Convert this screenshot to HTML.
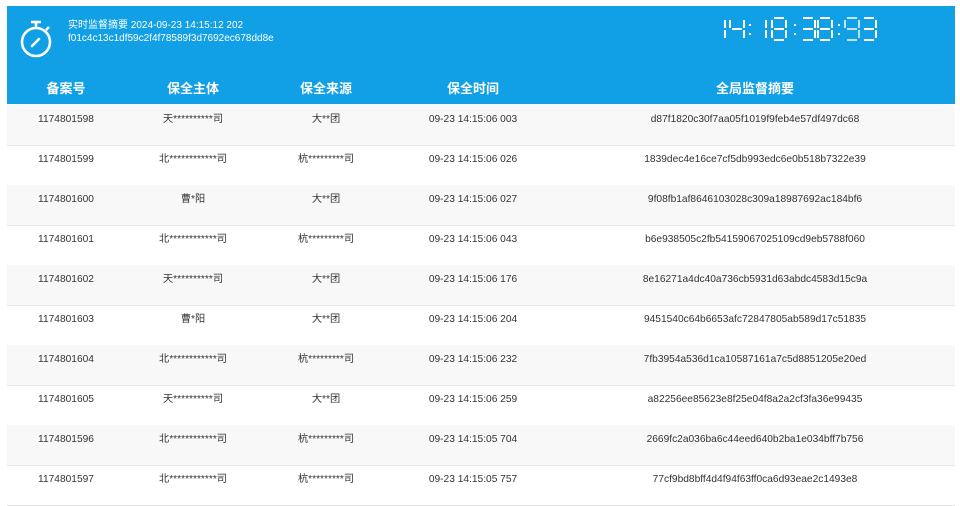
<!DOCTYPE html>
<html><head><meta charset="utf-8">
<style>
body{margin:0;width:960px;height:503px;background:#fff;font-family:"Liberation Sans","Noto Sans CJK SC",sans-serif;overflow:hidden;position:relative}
.hdr{position:absolute;left:7px;top:6px;width:948px;height:98px;background:#11a0e6;color:#fff}
.info{position:absolute;left:61px;top:13px;font-size:10px;line-height:13px}
.th{position:absolute;top:74px;font-size:13px;line-height:18px;font-weight:bold;transform:translateX(-50%);white-space:nowrap}
.row{position:absolute;left:7px;width:948px;height:40px;border-bottom:1px solid #e6e6e6;font-size:10.2px;color:#333}
.row span{position:absolute;top:8px;line-height:14px;transform:translateX(-50%);white-space:nowrap}
.g{background:#f8f8f8}
</style></head><body>
<div class="hdr">
<svg style="position:absolute;left:12px;top:12px" width="36" height="42" viewBox="0 0 36 42"><circle cx="17" cy="24" r="14" fill="none" stroke="#fff" stroke-width="2.6"/><line x1="17" y1="10" x2="17" y2="5" stroke="#fff" stroke-width="2.6"/><line x1="12" y1="4" x2="22" y2="4" stroke="#fff" stroke-width="2.6"/><line x1="27" y1="12" x2="30" y2="9" stroke="#fff" stroke-width="2.6"/><line x1="13" y1="28" x2="20" y2="21" stroke="#fff" stroke-width="2.6" stroke-linecap="round"/></svg>
<div class="info">实时监督摘要 2024-09-23 14:15:12 202<br>f01c4c13c1df59c2f4f78589f3d7692ec678dd8e</div>
<svg id="clk" style="position:absolute;left:-7px;top:0" width="955" height="50"></svg>
<div class="th" style="left:59px">备案号</div>
<div class="th" style="left:186px">保全主体</div>
<div class="th" style="left:319px">保全来源</div>
<div class="th" style="left:466px">保全时间</div>
<div class="th" style="left:748px">全局监督摘要</div>
</div>
<div id="rows"></div>
<script>
var d=[["1174801598","天**********司","大**团","09-23 14:15:06 003","d87f1820c30f7aa05f1019f9feb4e57df497dc68"],
["1174801599","北************司","杭*********司","09-23 14:15:06 026","1839dec4e16ce7cf5db993edc6e0b518b7322e39"],
["1174801600","曹*阳","大**团","09-23 14:15:06 027","9f08fb1af8646103028c309a18987692ac184bf6"],
["1174801601","北************司","杭*********司","09-23 14:15:06 043","b6e938505c2fb54159067025109cd9eb5788f060"],
["1174801602","天**********司","大**团","09-23 14:15:06 176","8e16271a4dc40a736cb5931d63abdc4583d15c9a"],
["1174801603","曹*阳","大**团","09-23 14:15:06 204","9451540c64b6653afc72847805ab589d17c51835"],
["1174801604","北************司","杭*********司","09-23 14:15:06 232","7fb3954a536d1ca10587161a7c5d8851205e20ed"],
["1174801605","天**********司","大**团","09-23 14:15:06 259","a82256ee85623e8f25e04f8a2a2cf3fa36e99435"],
["1174801596","北************司","杭*********司","09-23 14:15:05 704","2669fc2a036ba6c44eed640b2ba1e034bff7b756"],
["1174801597","北************司","杭*********司","09-23 14:15:05 757","77cf9bd8bff4d4f94f63ff0ca6d93eae2c1493e8"]];
var xs=[59,186,319,466,748],h="";
d.forEach(function(r,i){h+='<div class="row'+(i%2==0?' g':'')+'" style="top:'+(105+i*40)+'px">';r.forEach(function(t,j){h+='<span style="left:'+xs[j]+'px">'+t+'</span>'});h+='</div>'});
document.getElementById('rows').innerHTML=h;
var seg={0:"abcdef",1:"bc",2:"abged",3:"abgcd",4:"fgbc",8:"abcdefg",9:"abcdfg"};
var s="";
function dig(ch,x,col){var y=12,w=14,H=22,m=y+H/2;var L={a:[x+2,y,x+w-2,y],b:[x+w,y+2,x+w,m-1],c:[x+w,m+1,x+w,y+H-2],d:[x+2,y+H,x+w-2,y+H],e:[x,m+1,x,y+H-2],f:[x,y+2,x,m-1],g:[x+2,m,x+w-2,m]};
seg[ch].split("").forEach(function(k){var p=L[k];s+='<line x1="'+p[0]+'" y1="'+p[1]+'" x2="'+p[2]+'" y2="'+p[3]+'" stroke="'+col+'" stroke-width="2"/>'});}
function colon(x){s+='<rect x="'+x+'" y="18" width="2" height="2" fill="#fff"/><rect x="'+x+'" y="27" width="2" height="2" fill="#fff"/>';}
dig(1,711,"#fff");dig(4,730,"#fff");colon(749);
dig(1,752,"#fff");dig(8,772,"#fff");colon(794);
dig(3,801,"#fff");dig(8,818,"#fff");colon(838);
dig(9,845,"#bfe3f7");dig(3,862,"#fff");
document.getElementById('clk').innerHTML=s;
</script>
</body></html>
